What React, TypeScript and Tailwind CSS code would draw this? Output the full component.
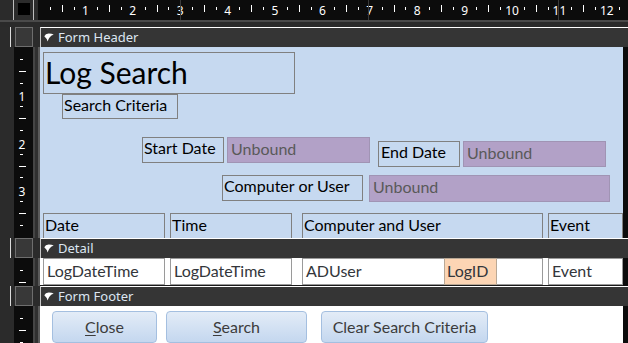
import React from "react";

const UNIT = 47.4;

function HRuler() {
  const marks: React.ReactNode[] = [];
  for (let i = 0; i < 13; i++) {
    const x = i * UNIT;
    if (i > 0)
      marks.push(
        <span key={`n${i}`} className="absolute top-[5px] -translate-x-1/2 text-[12px] leading-none text-white" style={{ left: x }}>
          {i}
        </span>
      );
    marks.push(<span key={`a${i}`} className="absolute top-[7px] h-[3px] w-px bg-white" style={{ left: x + UNIT * 0.25 }} />);
    marks.push(<span key={`b${i}`} className="absolute top-[5px] h-[7px] w-px bg-white" style={{ left: x + UNIT * 0.5 }} />);
    marks.push(<span key={`c${i}`} className="absolute top-[7px] h-[3px] w-px bg-white" style={{ left: x + UNIT * 0.75 }} />);
  }
  return (
    <div className="relative flex-1 overflow-hidden bg-[#0c0c0c] font-['Noto_Sans',sans-serif]">
      {marks}
      {/* grid guide lines */}
      <span className="absolute top-0 left-[142px] h-full w-px bg-[#3a3a3a]" />
      <span className="absolute top-0 left-[330px] h-full w-px bg-[#3a3a3a]" />
      <span className="absolute top-0 left-[520px] h-full w-px bg-[#3a3a3a]" />
    </div>
  );
}

function VRuler({ units }: { units: number }) {
  const marks: React.ReactNode[] = [];
  for (let i = 0; i < units; i++) {
    const y = i * UNIT;
    if (i > 0)
      marks.push(
        <span key={`n${i}`} className="absolute left-[8px] -translate-x-1/2 -translate-y-1/2 text-[12px] leading-none text-white" style={{ top: y + 3 }}>
          {i}
        </span>
      );
    marks.push(<span key={`a${i}`} className="absolute left-[6px] h-px w-[3px] bg-white" style={{ top: y + UNIT * 0.25 }} />);
    marks.push(<span key={`b${i}`} className="absolute left-[5px] h-px w-[7px] bg-white" style={{ top: y + UNIT * 0.5 }} />);
    marks.push(<span key={`c${i}`} className="absolute left-[6px] h-px w-[3px] bg-white" style={{ top: y + UNIT * 0.75 }} />);
  }
  return (
    <div className="flex w-[40px] shrink-0 bg-[#2b2b2b]">
      <div className="ml-[14px] relative w-[19px] overflow-hidden bg-[#0c0c0c] font-['Noto_Sans',sans-serif]">{marks}</div>
      <div className="w-[2px] bg-[#454545]" />
      <div className="w-[3px] bg-[#303030]" />
      <div className="w-[2px] bg-[#5a5a5a]" />
    </div>
  );
}

function SectionBar({ title }: { title: string }) {
  return (
    <div className="flex h-[20px] shrink-0">
      <div className="flex w-[40px] shrink-0 bg-[#2b2b2b]">
        <div className="ml-[10px] w-px bg-[#dcdcdc]" />
        <div className="ml-[4px] w-[18px] border border-[#6e6e6e] bg-[#383838]" />
      </div>
      <div className="flex flex-1 items-center border-t border-l border-t-white border-l-[#c8c8c8] bg-[#353535] pl-[3px]">
        <svg width="10" height="9" viewBox="0 0 10 9" className="shrink-0">
          <path d="M0.3 3.2 Q1.5 0.6 4.5 0.5 Q7.5 0.4 9.7 1.6 Q7 2.6 5.2 5 Q4.2 6.6 3.6 8.6 Q2.8 5.2 0.3 3.2 Z" fill="#ffffff" />
        </svg>
        <span className="ml-[4px] text-[13px] leading-none text-[#dce6f2] font-['Noto_Sans',sans-serif]">{title}</span>
      </div>
    </div>
  );
}

function Label({ text, className = "" }: { text: string; className?: string }) {
  return (
    <div className={`shrink-0 border border-[#808080] pl-[1px] text-[16px] leading-[20px] text-black ${className}`}>
      {text}
    </div>
  );
}

function Unbound({ className = "" }: { className?: string }) {
  return (
    <div className={`shrink-0 border border-[#a094b4] bg-[#b2a1c7] pl-[3px] text-[16px] leading-[21px] text-[#595959] ${className}`}>
      Unbound
    </div>
  );
}

function Field({ text, className = "", children }: { text: string; className?: string; children?: React.ReactNode }) {
  return (
    <div className={`relative h-[27px] shrink-0 border border-[#9a9a9a] bg-white pl-[3px] pt-[2px] text-[16px] leading-[20px] text-[#33363b] ${className}`}>
      {text}
      {children}
    </div>
  );
}

function Btn({ label, rest, className = "" }: { label: string; rest: string; className?: string }) {
  return (
    <button className={`h-[32px] shrink-0 rounded-[4px] border border-[#a4bfe0] bg-gradient-to-b from-[#e3ecf7] to-[#c4d7ef] text-[16px] text-[#3c3c3c] ${className}`}>
      <span className="underline underline-offset-2">{label}</span>
      {rest}
    </button>
  );
}

export default function App() {
  return (
    <div className="flex h-[343px] w-[628px] flex-col overflow-hidden bg-[#2b2b2b] font-['Lato',sans-serif]">
      {/* top ruler */}
      <div className="flex h-[20px] shrink-0">
        <div className="flex w-[38px] shrink-0 bg-[#2b2b2b]">
          <div className="ml-[13px] flex w-[21px] items-start justify-center border-x border-[#bdbdbd] pt-[3px]">
            <div className="h-[12px] w-[12px] bg-black" />
          </div>
        </div>
        <HRuler />
      </div>
      <div className="h-[7px] shrink-0 border-t-2 border-[#4a4a4a] bg-[#2a2a2a]" />

      <SectionBar title="Form Header" />

      {/* form header */}
      <div className="flex h-[191px] shrink-0">
        <VRuler units={4} />
        <div className="flex flex-1 flex-col overflow-hidden bg-[#c6d9f0] pl-[3px] pt-[5px]">
          <div className="h-[42px] w-[252px] shrink-0 border border-[#808080] pl-[1px] text-[30px] leading-[38px] text-black">
            Log Search
          </div>
          <Label text="Search Criteria" className="ml-[19px] h-[25px] w-[116px]" />
          <div className="mt-[18px] flex items-start">
            <Label text="Start Date" className="ml-[99px] h-[26px] w-[82px]" />
            <Unbound className="ml-[3px] h-[26px] w-[143px]" />
            <Label text="End Date" className="ml-[8px] mt-[4px] h-[26px] w-[82px] pl-[2px]" />
            <Unbound className="ml-[3px] mt-[4px] h-[26px] w-[143px]" />
          </div>
          <div className="mt-[8px] flex items-start">
            <Label text="Computer or User" className="ml-[179px] h-[26px] w-[141px]" />
            <Unbound className="ml-[6px] h-[27px] w-[241px]" />
          </div>
          <div className="mt-[11px] flex items-start">
            <Label text="Date" className="h-[32px] w-[122px] pt-[1px]" />
            <Label text="Time" className="ml-[5px] h-[32px] w-[122px] pt-[1px]" />
            <Label text="Computer and User" className="ml-[10px] h-[32px] w-[241px] pt-[1px]" />
            <Label text="Event" className="ml-[5px] h-[32px] w-[75px] pt-[1px]" />
          </div>
        </div>
        <div className="w-[5px] shrink-0 bg-[#0c0c0c]" />
      </div>

      <SectionBar title="Detail" />

      {/* detail */}
      <div className="flex h-[28px] shrink-0">
        <VRuler units={1} />
        <div className="flex flex-1 border-b border-[#1a1a1a] bg-white pl-[3px]">
          <Field text="LogDateTime" className="w-[122px]" />
          <Field text="LogDateTime" className="ml-[5px] w-[122px]" />
          <Field text="ADUser" className="ml-[10px] w-[241px]">
            <div className="absolute top-[-1px] left-[141px] h-[27px] w-[53px] border border-[#b8a896] bg-[#fcd5b4] pl-[2px] pt-[2px]">
              LogID
            </div>
          </Field>
          <Field text="Event" className="ml-[5px] w-[75px]" />
        </div>
        <div className="w-[5px] shrink-0 bg-[#0c0c0c]" />
      </div>

      <SectionBar title="Form Footer" />

      {/* form footer */}
      <div className="flex flex-1">
        <VRuler units={1} />
        <div className="flex flex-1 items-start bg-white pl-[12px] pt-[5px]">
          <Btn label="C" rest="lose" className="w-[105px]" />
          <Btn label="S" rest="earch" className="ml-[9px] w-[141px]" />
          <button className="ml-[14px] h-[32px] w-[167px] shrink-0 rounded-[4px] border border-[#a4bfe0] bg-gradient-to-b from-[#e3ecf7] to-[#c4d7ef] text-[16px] text-[#3c3c3c]">
            Clear Search Criteria
          </button>
        </div>
        <div className="w-[5px] shrink-0 bg-[#0c0c0c]" />
      </div>
    </div>
  );
}
